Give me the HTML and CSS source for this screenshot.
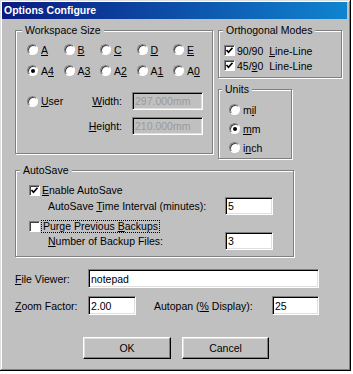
FILE: index.html
```html
<!DOCTYPE html>
<html lang="en">
<head>
    <meta charset="UTF-8">
    <title>Options Configure</title>
    <link rel="stylesheet" href="styles.css">
</head>
<body>
    <div class="window">
        <div class="titlebar">Options Configure</div>
        <div class="dialog">
            <div class="top">
                <fieldset class="group workspace">
                    <legend>Workspace Size</legend>
                    <div class="sizes">
                        <label class="opt"><span class="radio"></span><span><u>A</u></span></label>
                        <label class="opt"><span class="radio"></span><span><u>B</u></span></label>
                        <label class="opt"><span class="radio"></span><span><u>C</u></span></label>
                        <label class="opt"><span class="radio"></span><span><u>D</u></span></label>
                        <label class="opt"><span class="radio"></span><span><u>E</u></span></label>
                        <label class="opt"><span class="radio on"></span><span>A<u>4</u></span></label>
                        <label class="opt"><span class="radio"></span><span>A<u>3</u></span></label>
                        <label class="opt"><span class="radio"></span><span>A<u>2</u></span></label>
                        <label class="opt"><span class="radio"></span><span>A<u>1</u></span></label>
                        <label class="opt"><span class="radio"></span><span>A<u>0</u></span></label>
                    </div>
                    <div class="user-row first">
                        <label class="opt"><span class="radio"></span><span><u>U</u>ser</span></label>
                        <span class="dim-label"><u>W</u>idth:</span>
                        <input class="field" type="text" value="297.000mm" disabled>
                    </div>
                    <div class="user-row">
                        <span></span>
                        <span class="dim-label"><u>H</u>eight:</span>
                        <input class="field" type="text" value="210.000mm" disabled>
                    </div>
                </fieldset>

                <div class="side">
                    <fieldset class="group ortho">
                        <legend>Orthogonal Modes</legend>
                        <div class="checks">
                            <label class="opt chk"><span class="checkbox on"></span><span>90/90 &nbsp;<u>L</u>ine-Line</span></label>
                            <label class="opt chk"><span class="checkbox on"></span><span>45/<u>9</u>0 &nbsp;Line-Line</span></label>
                        </div>
                    </fieldset>
                    <fieldset class="group units">
                        <legend>Units</legend>
                        <div class="radios">
                            <label class="opt"><span class="radio"></span><span>m<u>i</u>l</span></label>
                            <label class="opt"><span class="radio on"></span><span><u>m</u>m</span></label>
                            <label class="opt"><span class="radio"></span><span>i<u>n</u>ch</span></label>
                        </div>
                    </fieldset>
                </div>
            </div>

            <fieldset class="group autosave">
                <legend>AutoSave</legend>
                <label class="opt chk enable"><span class="checkbox on"></span><span><u>E</u>nable AutoSave</span></label>
                <div class="field-row time">
                    <span class="field-label">AutoSave <u>T</u>ime Interval (minutes):</span>
                    <input class="field small" type="text" value="5">
                </div>
                <label class="opt chk purge"><span class="checkbox"></span><span class="focus">Purge Previous <u>B</u>ackups</span></label>
                <div class="field-row">
                    <span class="field-label"><u>N</u>umber of Backup Files:</span>
                    <input class="field small" type="text" value="3">
                </div>
            </fieldset>

            <div class="line viewer">
                <span class="line-label"><u>F</u>ile Viewer:</span>
                <input class="field wide" type="text" value="notepad">
            </div>
            <div class="line zoom">
                <span class="line-label"><u>Z</u>oom Factor:</span>
                <input class="field zoomf" type="text" value="2.00">
                <span class="autopan">Autopan (<u>%</u> Display):</span>
                <input class="field pan" type="text" value="25">
            </div>

            <div class="buttons">
                <button class="btn ok">OK</button>
                <button class="btn cancel">Cancel</button>
            </div>
        </div>
    </div>
</body>
</html>
```

FILE: styles.css
```css
* {
    box-sizing: border-box;
}

body {
    margin: 0;
    background-color: #fff;
    font-family: "Liberation Sans", Arial, sans-serif;
    font-size: 10.5px;
    color: #000;
}

.window {
    width: 351px;
    height: 371px;
    padding: 2px;
    background-color: #c0c0c0;
    box-shadow: inset -1px -1px #000, inset 1px 1px #dfdfdf, inset -2px -2px #808080, inset 2px 2px #fff;
}

.titlebar {
    width: 345px;
    height: 17px;
    padding-left: 2px;
    line-height: 17px;
    font-weight: bold;
    color: #fff;
    background: linear-gradient(to right, #0a1a80, #1084d0);
}

.dialog {
    padding-left: 13px;
}

.top {
    display: flex;
    gap: 5px;
    margin-top: 5px;
}

/* etched group frames */
.group {
    margin: 0;
    padding: 0;
    border: 1px solid #808080;
    box-shadow: inset 1px 1px #fff, 1px 1px #fff;
}

.group legend {
    padding: 0 3px;
    margin-left: 6px;
    line-height: 13px;
    background-color: #c0c0c0;
}

.opt {
    display: flex;
    align-items: center;
    gap: 3px;
    height: 13px;
    white-space: nowrap;
}

.opt.chk {
    gap: 2px;
}

.radio {
    display: grid;
    place-items: center;
    width: 11px;
    height: 11px;
    border-radius: 50%;
    border: 1px solid;
    border-color: #808080 #fff #fff #808080;
    background-color: #fff;
    box-shadow: inset 1px 1px #404040;
}

.radio.on::after {
    content: "";
    width: 4px;
    height: 4px;
    border-radius: 50%;
    background-color: #000;
}

.checkbox {
    width: 11px;
    height: 11px;
    border: 1px solid;
    border-color: #808080 #fff #fff #808080;
    background-color: #fff;
    box-shadow: inset 1px 1px #404040;
}

.checkbox.on {
    background: #fff url("data:image/svg+xml,%3Csvg xmlns='http://www.w3.org/2000/svg' viewBox='0 0 9 9'%3E%3Cpath d='M1.5 4 L3.5 6.2 L7.5 1.8' fill='none' stroke='%23000' stroke-width='1.7'/%3E%3C/svg%3E") center / 9px 9px no-repeat;
}

.field {
    height: 18px;
    padding: 0 2px;
    font-family: inherit;
    font-size: inherit;
    color: #000;
    background-color: #fff;
    border: 1px solid;
    border-color: #808080 #fff #fff #808080;
    box-shadow: inset 1px 1px #000, inset -1px -1px #dfdfdf;
    outline: none;
}

.field:disabled {
    color: #9a9a9a;
    background-color: #c0c0c0;
}

/* workspace size */
.workspace {
    width: 198px;
    height: 130px;
}

.sizes {
    display: grid;
    grid-template-columns: repeat(5, 36.5px);
    row-gap: 8px;
    margin: 6px 0 0 11px;
}

.user-row {
    display: grid;
    grid-template-columns: 56px 39px 81px;
    align-items: center;
    height: 18px;
    margin: 7px 0 0 11px;
}

.user-row.first {
    margin-top: 15px;
}

.dim-label {
    text-align: right;
}

.user-row .field {
    width: 71px;
    margin-left: 10px;
}

/* right column */
.side {
    display: flex;
    flex-direction: column;
    gap: 5px;
}

.ortho {
    width: 124px;
    height: 54px;
}

.ortho legend {
    margin-left: 4px;
}

.checks {
    display: flex;
    flex-direction: column;
    gap: 2px;
    margin: 7px 0 0 5px;
}

.units {
    width: 74px;
    height: 76px;
}

.units legend {
    margin-left: 3px;
}

.radios {
    display: flex;
    flex-direction: column;
    gap: 6px;
    margin: 7px 0 0 10px;
}

/* autosave */
.autosave {
    width: 279px;
    height: 93px;
    margin-top: 5px;
}

.autosave legend {
    margin-left: 4px;
}

.autosave .opt {
    height: 12px;
    margin-left: 13px;
}

.enable {
    margin-top: 7px;
}

.purge {
    margin-top: 5px;
}

.focus {
    padding: 0 1px;
    line-height: 11px;
    outline: 1px dotted #000;
}

.field-row {
    display: flex;
    align-items: center;
    height: 18px;
    margin-left: 32px;
}

.field-row.time {
    margin-top: 1px;
}

.field-label {
    width: 177px;
}

.field.small {
    width: 48px;
}

/* bottom lines */
.line {
    display: flex;
    align-items: center;
    height: 19px;
}

.line .field {
    height: 19px;
}

.viewer {
    margin-top: 12px;
}

.zoom {
    margin-top: 8px;
}

.line-label {
    width: 73px;
}

.field.wide {
    width: 231px;
}

.field.zoomf {
    width: 48px;
}

.autopan {
    width: 118px;
    margin-left: 18px;
}

.field.pan {
    width: 47px;
}

.buttons {
    display: flex;
    gap: 11px;
    margin-top: 22px;
    padding-left: 68px;
}

.btn {
    height: 22px;
    padding: 0;
    font-family: inherit;
    font-size: inherit;
    color: #000;
    background-color: #c0c0c0;
    border: 1px solid;
    border-color: #fff #000 #000 #fff;
    box-shadow: inset -1px -1px #808080, inset 1px 1px #dfdfdf;
}

.btn.ok {
    width: 88px;
}

.btn.cancel {
    width: 87px;
}
```
